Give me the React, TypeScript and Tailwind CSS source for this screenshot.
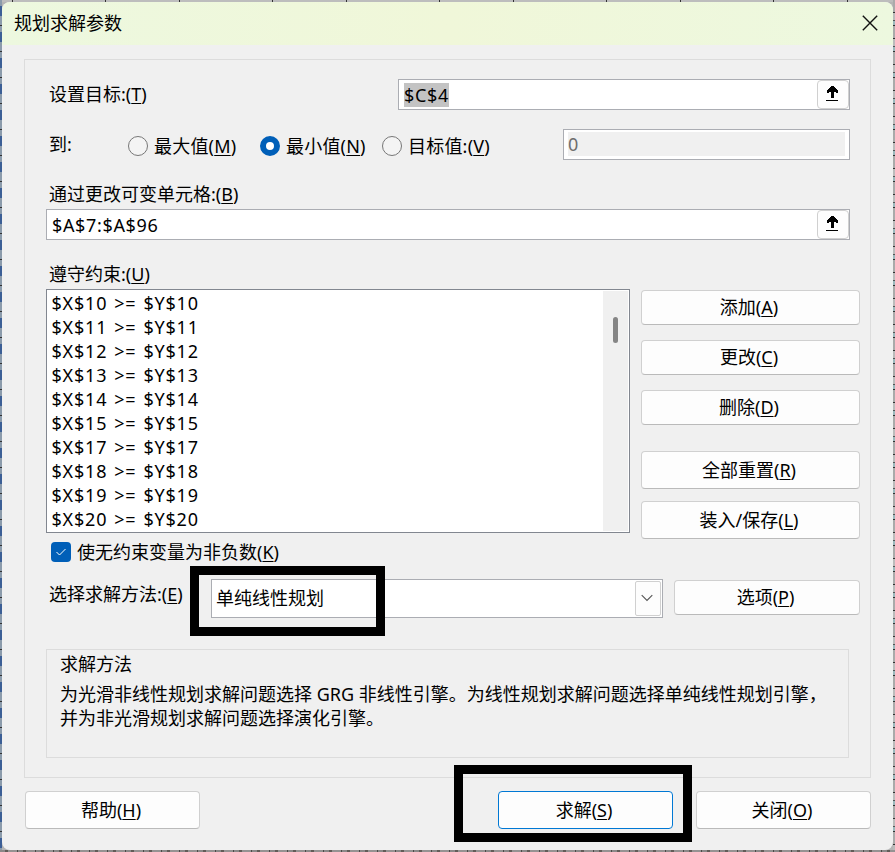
import { useState, type ReactNode } from "react";
import clsx from "clsx";

const CONSTRAINT_ROWS = [10, 11, 12, 13, 14, 15, 17, 18, 19, 20];

const GOALS = [
    { id: "max", label: "最大值", hotkey: "M", className: "w-[132px]" },
    { id: "min", label: "最小值", hotkey: "N", className: "w-[122px]" },
    { id: "value", label: "目标值:", hotkey: "V", className: "w-[181px]" },
];

function Hotkey({ children }: { children: string }) {
    return (
        <span>
            (<span className="underline decoration-1 underline-offset-[2px]">{children}</span>)
        </span>
    );
}

interface ButtonProps {
    label: string;
    hotkey: string;
    className?: string;
    primary?: boolean;
}

function Button({ label, hotkey, className, primary }: ButtonProps) {
    return (
        <button
            className={clsx(
                "flex items-center justify-center rounded-[4px] border bg-[#fdfdfd] pr-[3px] whitespace-nowrap",
                primary ? "border-[#0078d4]" : "border-[#d0d0d0] border-b-[#bababa]",
                className
            )}
        >
            {label}
            <Hotkey>{hotkey}</Hotkey>
        </button>
    );
}

function RefInput({ children, className }: { children: ReactNode; className?: string }) {
    return (
        <div className={clsx("flex h-[31px] items-center border border-[#abadb3] bg-white pl-[5px]", className)}>
            <div className="flex-1 tracking-[0.65px]">{children}</div>
            <button className="flex h-[29px] w-8 items-center justify-center rounded-[4px] border border-[#d0d0d0] bg-[#fdfdfd] pr-0.5 pb-[3px]">
                <svg width="12" height="15" viewBox="0 0 12 15" shapeRendering="crispEdges">
                    <path d="M5 0h3v1h1v1h1v1h1v1h1v3h-2V6H8v6H5V6H3v1H1V4h1V3h1V2h1V1h1z" fill="#000" />
                    <path d="M0 14h12v1H0z" fill="#000" />
                </svg>
            </button>
        </div>
    );
}

export default function App() {
    const [goal, setGoal] = useState("min");

    return (
        <div className="relative h-[852px] w-[895px] overflow-hidden bg-[#b5b5b5] p-[2px] font-['Noto_Sans','Noto_Sans_CJK_SC',sans-serif] text-[18px] leading-6 text-black">
            {/* slivers of the worksheet behind the dialog */}
            <div className="absolute inset-x-0 top-0 h-[2px] bg-[repeating-linear-gradient(90deg,#bdbdbd_0_12px,#333_12px_13px,#bdbdbd_13px_105px,#333_105px_106px,#bdbdbd_106px_167px)]" />
            <div className="absolute inset-y-0 left-0 h-[852px] w-[2px] bg-[repeating-linear-gradient(180deg,#8b9bab_0_6px,#3c5f96_6px_16px,#8b9bab_16px_25px,#333_25px_26px)]" />
            <div className="absolute inset-y-0 right-0 h-[852px] w-[2px] bg-[repeating-linear-gradient(180deg,#aaa_0_12px,#333_12px_13px,#bbb_13px_20px,#555_20px_21px,#9bb8bc_21px_25px,#333_25px_26px)]" />
            <div className="absolute inset-x-0 bottom-0 h-[2px] bg-[repeating-linear-gradient(90deg,#8b8888_0_5px,#625c58_5px_8px,#969292_8px_17px,#4d4a48_17px_18px)]" />

            <div className="relative flex h-[848px] w-[891px] flex-col overflow-hidden rounded-[8px] bg-[#f0f0f0]">
                <header className="flex h-[43px] shrink-0 items-center justify-between bg-linear-to-r from-[#edf8df] via-[#f0f7d9] to-[#edf8df] pr-[15px] pb-0.5 pl-3">
                    <h1>规划求解参数</h1>
                    <svg width="16" height="16" viewBox="0 0 16 16" stroke="#111" strokeWidth="1.4">
                        <path d="M0.8 0.8l14.4 14.4M15.2 0.8L0.8 15.2" />
                    </svg>
                </header>

                <main className="mt-[14px] ml-[22px] h-[719px] w-[847px] shrink-0 border border-[#dcdcdc] pl-[21px]">
                    <div className="mt-[19px] flex h-[31px] w-[804px] items-center justify-between">
                        <label className="pb-0.5 pl-[3px]">
                            设置目标:<Hotkey>T</Hotkey>
                        </label>
                        <RefInput className="w-[452px]">
                            <span className="inline-block bg-[#c3c3c3]">$C$4</span>
                        </RefInput>
                    </div>

                    <div className="mt-[19px] flex h-[31px] items-center">
                        <span className="w-[82px] pb-px pl-[3px]">到:</span>
                        {GOALS.map(({ id, label, hotkey, className }) => (
                            <button
                                key={id}
                                className={clsx("flex items-center gap-1.5 pt-[3px] whitespace-nowrap", className)}
                                onClick={() => setGoal(id)}
                            >
                                <span
                                    className={clsx(
                                        "size-5 rounded-full",
                                        goal === id ? "border-[6px] border-[#005fb8] bg-white" : "border border-[#777] bg-[#f4f4f4]"
                                    )}
                                />
                                <span className="tracking-[0.2px]">
                                    {label}
                                    <Hotkey>{hotkey}</Hotkey>
                                </span>
                            </button>
                        ))}
                        <div className="h-[31px] w-[287px] border border-[#abadb3] bg-white pt-[2px] pr-1 pb-[3px] pl-1">
                            <div className="h-6 bg-[#f0f0f0] leading-6 text-[#6d6d6d]">0</div>
                        </div>
                    </div>

                    <div className="mt-[22px] h-[27px] pl-[3px]">
                        通过更改可变单元格:<Hotkey>B</Hotkey>
                    </div>
                    <RefInput className="w-[804px]">$A$7:$A$96</RefInput>

                    <div className="mt-[22px] h-[27px] pl-[3px]">
                        遵守约束:<Hotkey>U</Hotkey>
                    </div>
                    <div className="flex h-[244px] gap-[11px]">
                        <div className="flex w-[584px] justify-between border border-[#828790] bg-white p-px">
                            <ul className="pl-[3.5px] tracking-[0.8px] [word-spacing:1.5px]">
                                {CONSTRAINT_ROWS.map((row) => (
                                    <li key={row} className="h-6">
                                        $X${row} &gt;= $Y${row}
                                    </li>
                                ))}
                            </ul>
                            <div className="w-[25px] bg-[#f0f0f0] pt-[26px] pl-[10px]">
                                <div className="h-[26px] w-[5px] rounded-full bg-[#858585]" />
                            </div>
                        </div>
                        <div className="flex w-[219px] flex-col pt-px">
                            <Button label="添加" hotkey="A" className="h-[35px] shrink-0 pb-0.5" />
                            <Button label="更改" hotkey="C" className="mt-[15px] h-[35px] shrink-0 pb-0.5" />
                            <Button label="删除" hotkey="D" className="mt-[15px] h-[35px] shrink-0 pb-0.5" />
                            <Button label="全部重置" hotkey="R" className="mt-[26px] h-[38px] shrink-0" />
                            <Button label="装入/保存" hotkey="L" className="mt-[12px] h-[38px] shrink-0" />
                        </div>
                    </div>

                    <div className="mt-[7px] flex h-6 items-center gap-1.5 pl-[5px]">
                        <span className="flex size-5 items-center justify-center rounded-[4px] bg-[#005fb8]">
                            <svg width="12" height="10" viewBox="0 0 12 10" fill="none" stroke="#fff" strokeWidth="1">
                                <path d="M1.5 5l3 3L10.5 2" />
                            </svg>
                        </span>
                        <span>
                            使无约束变量为非负数<Hotkey>K</Hotkey>
                        </span>
                    </div>

                    <div className="mt-[15px] flex h-[39px]">
                        <label className="w-[165px] pt-[3px] pl-[3px]">
                            选择求解方法:<Hotkey>E</Hotkey>
                        </label>
                        <div className="flex w-[452px] items-center justify-between border border-[#abadb3] bg-white pr-px pl-1">
                            <span className="pb-0.5">单纯线性规划</span>
                            <span className="flex h-[35px] w-[26px] items-center justify-center rounded-[2px] border border-[#d0d0d0] bg-[#fdfdfd] pr-0.5 pb-0.5">
                                <svg width="12" height="8" viewBox="0 0 12 8" fill="none" stroke="#555" strokeWidth="1.1">
                                    <path d="M0.7 1.2L6 6.5l5.3-5.3" />
                                </svg>
                            </span>
                        </div>
                        <Button label="选项" hotkey="P" className="mt-px ml-[11px] h-[35px] w-[186px] pb-px" />
                    </div>

                    <section className="mt-[31px] h-[109px] w-[803px] border border-[#dcdcdc] pt-[2px] pl-[13px]">
                        <h2>求解方法</h2>
                        <p className="mt-[6px] whitespace-nowrap">
                            为光滑非线性规划求解问题选择 GRG 非线性引擎。为线性规划求解问题选择单纯线性规划引擎，
                            <br />
                            并为非光滑规划求解问题选择演化引擎。
                        </p>
                    </section>
                </main>

                <footer className="mt-[13px] ml-[23px] flex h-[38px]">
                    <Button label="帮助" hotkey="H" className="w-[175px]" />
                    <Button label="求解" hotkey="S" primary className="ml-[298px] w-[175px]" />
                    <Button label="关闭" hotkey="O" className="ml-[23px] w-[175px]" />
                </footer>
            </div>

            {/* highlight frames */}
            <div className="pointer-events-none absolute top-[566px] left-[190px] h-[70px] w-[195px] border-[9px] border-black" />
            <div className="pointer-events-none absolute top-[765px] left-[454px] h-[77px] w-[238px] border-[9px] border-black" />
        </div>
    );
}
